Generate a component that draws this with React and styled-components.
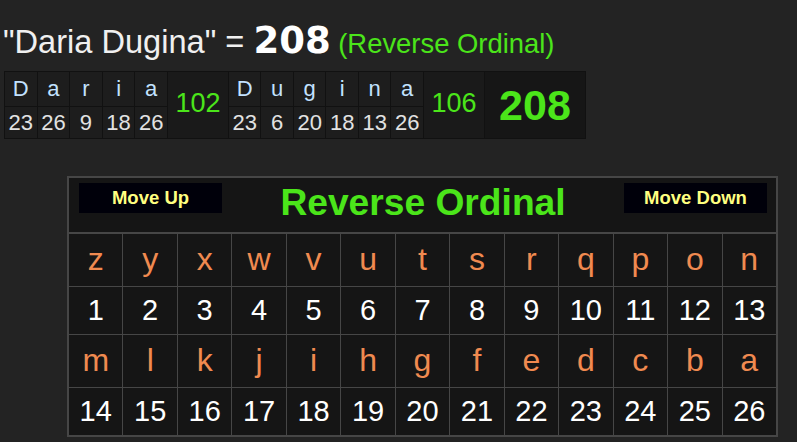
import React from 'react'
import styled, { createGlobalStyle } from 'styled-components'

const GlobalStyle = createGlobalStyle`
  html, body {
    margin: 0;
    padding: 0;
    background: #232323;
  }
  body {
    font-family: 'Liberation Sans', Arial, sans-serif;
  }
`

const words = [
  { letters: ['D', 'a', 'r', 'i', 'a'], values: [23, 26, 9, 18, 26], sum: 102 },
  { letters: ['D', 'u', 'g', 'i', 'n', 'a'], values: [23, 6, 20, 18, 13, 26], sum: 106 },
]

const alphabet = 'zyxwvutsrqponmlkjihgfedcba'.split('')

const App = () => {
  const firstHalf = alphabet.slice(0, 13)
  const secondHalf = alphabet.slice(13)
  let col = 1
  return (
    <>
      <GlobalStyle />
      <Page>
        <Title>
          <Phrase>"Daria Dugina" = </Phrase>
          <Total>208</Total>
          <Cipher> (Reverse Ordinal)</Cipher>
        </Title>

        <Breakdown>
          {words.map((word, w) => {
            const cells = word.letters.map((letter, i) => {
              const c = col++
              return (
                <React.Fragment key={`${w}-${i}`}>
                  <LetterCell style={{ gridColumn: c, gridRow: 1 }}>{letter}</LetterCell>
                  <ValueCell style={{ gridColumn: c, gridRow: 2 }}>{word.values[i]}</ValueCell>
                </React.Fragment>
              )
            })
            const s = col++
            return (
              <React.Fragment key={w}>
                {cells}
                <SumCell style={{ gridColumn: s }}>{word.sum}</SumCell>
              </React.Fragment>
            )
          })}
          <GrandCell style={{ gridColumn: col }}>208</GrandCell>
        </Breakdown>

        <Chart>
          <ChartHeader>
            <MoveButton>Move Up</MoveButton>
            <ChartTitle>Reverse Ordinal</ChartTitle>
            <MoveButton>Move Down</MoveButton>
          </ChartHeader>
          <Grid>
            {firstHalf.map((l) => (
              <ChartLetter key={l}>{l}</ChartLetter>
            ))}
            {firstHalf.map((l, i) => (
              <ChartNumber key={l}>{i + 1}</ChartNumber>
            ))}
            {secondHalf.map((l) => (
              <ChartLetter key={l}>{l}</ChartLetter>
            ))}
            {secondHalf.map((l, i) => (
              <ChartNumber key={l}>{i + 14}</ChartNumber>
            ))}
          </Grid>
        </Chart>
      </Page>
    </>
  )
}

export default App

const Page = styled.div`
  width: 797px;
  height: 442px;
  overflow: hidden;
`

const Title = styled.div`
  box-sizing: border-box;
  height: 71px;
  padding: 22px 0 0 3px;
  line-height: 1;
  white-space: pre;
  color: #f0f0f0;
  font-size: 32.6px;
`

const Phrase = styled.span`
  font-family: 'Liberation Sans', Arial, sans-serif;
`

const Total = styled.span`
  font-family: 'DejaVu Sans', Verdana, sans-serif;
  font-weight: bold;
  font-size: 37px;
  color: #ffffff;
`

const Cipher = styled.span`
  font-size: 27.4px;
  color: #4be51a;
`

const Breakdown = styled.div`
  display: inline-grid;
  margin-left: 4px;
  grid-template-columns: repeat(5, 31.6px) 60px repeat(6, 31.5px) 60px 100px;
  grid-template-rows: 34px 31px;
  gap: 1px;
  padding: 1px;
  background: #111111;
`

const Cell = styled.div`
  display: flex;
  align-items: center;
  justify-content: center;
  font-size: 22px;
`

const LetterCell = styled(Cell)`
  background: #1d1d1d;
  color: #c2e2ff;
`

const ValueCell = styled(Cell)`
  background: #1d1d1d;
  color: #e2e2e2;
`

const SumCell = styled(Cell)`
  grid-row: 1 / span 2;
  background: #1a1a1a;
  color: #4be51a;
  font-size: 27px;
  padding-bottom: 4px;
`

const GrandCell = styled(Cell)`
  grid-row: 1 / span 2;
  background: #161616;
  color: #4be51a;
  font-size: 43px;
  font-weight: bold;
`

const Chart = styled.div`
  width: 707px;
  margin: 37px 0 0 67px;
  border: 2px solid #464646;
  background: #151515;
`

const ChartHeader = styled.div`
  box-sizing: border-box;
  height: 56px;
  padding: 5px 9px 0 10px;
  display: flex;
  justify-content: space-between;
  align-items: flex-start;
  border-bottom: 2px solid #464646;
`

const MoveButton = styled.div`
  width: 143px;
  height: 30px;
  display: flex;
  align-items: center;
  justify-content: center;
  background: #00000a;
  color: #ffff80;
  font-weight: bold;
  font-size: 18.5px;
`

const ChartTitle = styled.div`
  margin-top: -1px;
  color: #4be51a;
  font-weight: bold;
  font-size: 37.2px;
  line-height: 41px;
`

const Grid = styled.div`
  display: grid;
  grid-template-columns: repeat(13, 1fr);
  grid-template-rows: 52px 47px 52px 47px;
  gap: 1px;
  background: #464646;
`

const ChartLetter = styled.div`
  display: flex;
  align-items: center;
  justify-content: center;
  background: #151515;
  color: #f08a50;
  font-size: 32px;
  padding-bottom: 2px;
`

const ChartNumber = styled.div`
  display: flex;
  align-items: center;
  justify-content: center;
  background: #151515;
  color: #ffffff;
  font-size: 29px;
`
